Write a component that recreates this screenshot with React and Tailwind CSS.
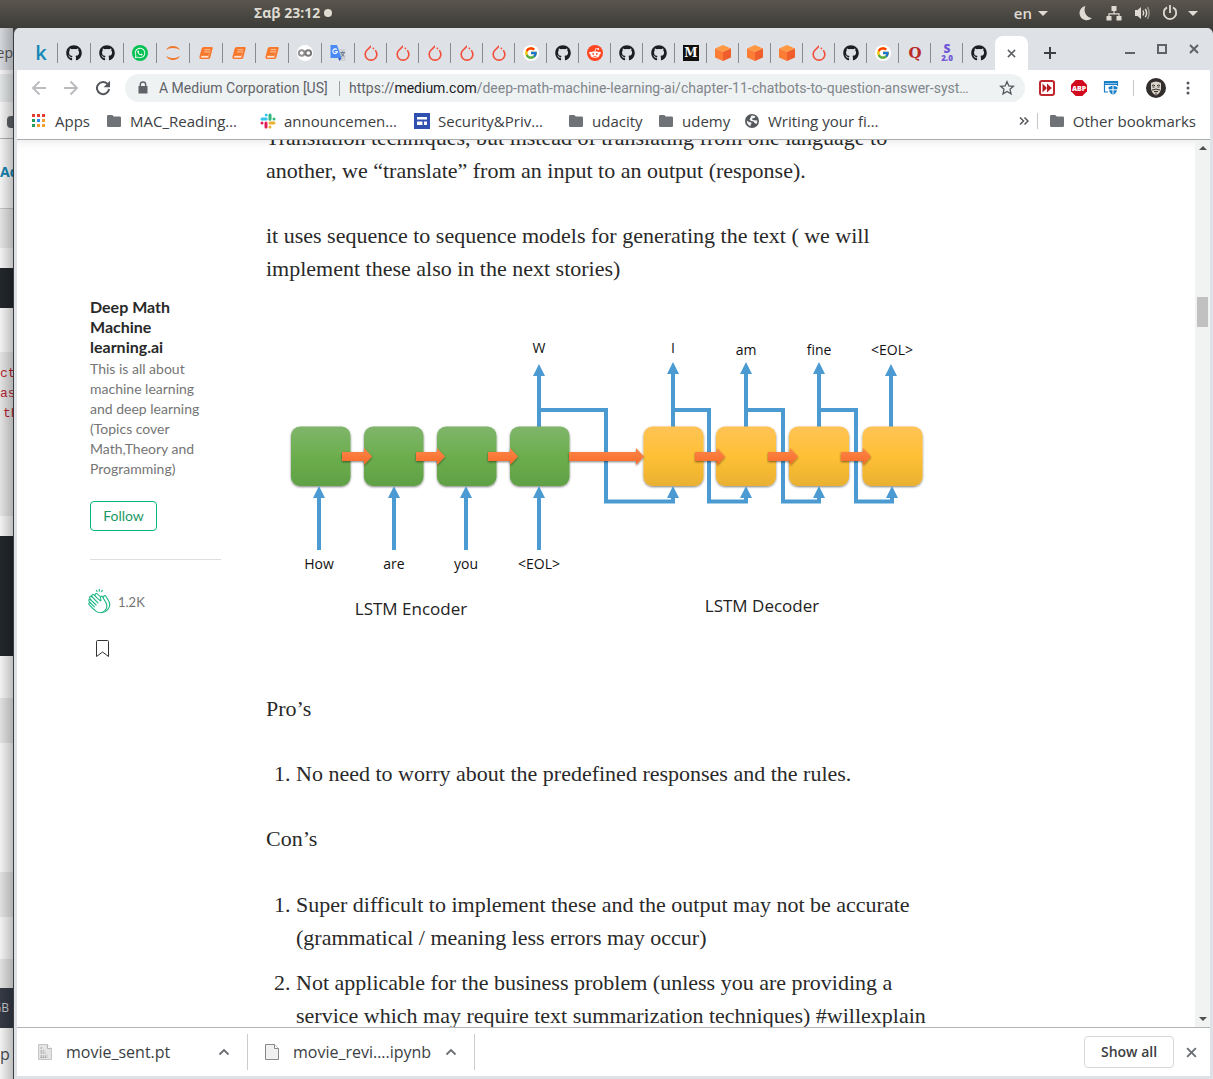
import React from "react";
import { FaGithub, FaWhatsapp } from "react-icons/fa";
import { SiPytorch } from "react-icons/si";
import { FcGoogle } from "react-icons/fc";

const Github = () => <FaGithub className="size-4 text-[#1b1f23]" />;
const Torch = () => <SiPytorch className="size-4 text-[#f0503c]" />;
const Google = () => (
  <span className="flex size-4 items-center justify-center rounded-full bg-white">
    <FcGoogle className="size-[14px]" />
  </span>
);
const Kaggle = () => <span className="w-4 text-center font-['Open_Sans',sans-serif] text-xl leading-4 font-semibold text-[#1388b8]">k</span>;
const WhatsApp = () => (
  <span className="flex size-4 items-center justify-center rounded-full bg-[#04c154]">
    <FaWhatsapp className="size-3 text-white" />
  </span>
);
const Jupyter = () => (
  <svg viewBox="0 0 16 16" className="size-4" fill="#f37726">
    <path d="M1 5.2C2.3 2.2 5 .9 8 .9s5.700 1.300 7 4.300C13.200 3.600 10.800 2.900 8 2.900S2.800 3.600 1 5.200z" />
    <path d="M1 10.800c1.300 3 4 4.300 7 4.300s5.700-1.300 7-4.300c-1.800 1.600-4.200 2.300-7 2.300S2.800 12.400 1 10.800z" />
  </svg>
);
const Book = () => (
  <svg viewBox="0 0 16 16" className="size-4">
    <path d="M5.600 2h8.200q1.200 0 .9 1.200l-2.400 9.300q-.4 1.500-2 1.500H3.200Q1 14 1.500 11.500L3.600 3.700Q4 2 5.600 2z" fill="#f9772a" />
    <path d="M6.600 4.700h5.400M6 6.900h5.400" stroke="#fbc9a5" strokeWidth="1" />
    <path d="M3 11h7.500l1.600-6" fill="none" stroke="#fbd3b6" strokeWidth=".7" opacity=".5" />
    <path d="M3.200 11.900h7.300" stroke="#fff" strokeWidth="1.100" />
  </svg>
);
const Colab = () => (
  <svg viewBox="0 0 16 16" className="size-4">
    <circle cx="8" cy="8" r="8" fill="#fff" />
    <circle cx="4.700" cy="8" r="2.800" fill="none" stroke="#929292" strokeWidth="2" />
    <circle cx="11.300" cy="8" r="2.800" fill="none" stroke="#7b7b7b" strokeWidth="2" />
  </svg>
);
const Translate = () => (
  <svg viewBox="0 0 16 16" className="size-4">
    <path d="M7 4h8.500v12H10z" fill="#cfd1d5" />
    <path d="M.5 0H7l4.500 13H.5z" fill="#4a8af4" />
    <path d="M8.200 13h3.300L9.500 16z" fill="#2456c5" />
    <path d="M6.900 4.700a2.300 2.300 0 1 0 .5 2.100H5" fill="none" stroke="#fff" strokeWidth="1.100" />
    <path d="M10.500 7.500h4.500M12.500 6.500v1M14 7.500c-.4 2-1.500 3.300-2.800 4M11.300 8c.6 1.500 1.700 2.700 3 3.500" fill="none" stroke="#5f6f86" strokeWidth=".9" />
  </svg>
);
const Reddit = () => (
  <svg viewBox="0 0 16 16" className="size-4">
    <circle cx="8" cy="8" r="8" fill="#ff4623" />
    <ellipse cx="8" cy="9.500" rx="4.600" ry="3.300" fill="#fff" />
    <circle cx="3.400" cy="7.900" r="1.200" fill="#fff" />
    <circle cx="12.600" cy="7.900" r="1.200" fill="#fff" />
    <circle cx="11.200" cy="4" r=".9" fill="#fff" />
    <path d="M8 6.500l.7-3 2.400.5" fill="none" stroke="#fff" strokeWidth=".7" />
    <circle cx="6.200" cy="8.900" r=".9" fill="#ff4623" />
    <circle cx="9.800" cy="8.900" r=".9" fill="#ff4623" />
    <path d="M6.200 11c1 .8 2.600.8 3.600 0" fill="none" stroke="#ff4623" strokeWidth=".7" />
  </svg>
);
const Medium = () => (
  <span className="flex size-4 items-center justify-center bg-[#12100e] font-['DejaVu_Serif',serif] text-xs leading-none font-bold text-white">M</span>
);
const Cube = () => (
  <svg viewBox="0 0 16 16" className="size-4">
    <path d="M8 0l8 3.500L8 7 0 3.500z" fill="#ff9840" />
    <path d="M0 3.500L8 7v9l-8-3.500z" fill="#fb7c33" />
    <path d="M16 3.500L8 7v9l8-3.500z" fill="#f05e2b" />
  </svg>
);
const Quora = () => <span className="w-4 text-center font-['DejaVu_Serif',serif] text-[15px] leading-4 font-bold text-[#b92b27]">Q</span>;
const S20 = () => (
  <span className="flex w-4 flex-col items-center font-['Open_Sans',sans-serif] font-extrabold text-[#7058d8]">
    <span className="text-xs leading-[10px]">S</span>
    <span className="text-[8px] leading-[8px]">2.0</span>
  </span>
);

const tabs = [
  ["Kaggle", Kaggle], ["GitHub", Github], ["GitHub", Github], ["WhatsApp", WhatsApp], ["Jupyter", Jupyter],
  ["Notebook", Book], ["Notebook", Book], ["Notebook", Book], ["Colab", Colab], ["Translate", Translate],
  ["PyTorch", Torch], ["PyTorch", Torch], ["PyTorch", Torch], ["PyTorch", Torch], ["PyTorch", Torch],
  ["Google", Google], ["GitHub", Github], ["Reddit", Reddit], ["GitHub", Github], ["GitHub", Github],
  ["Medium", Medium], ["Package", Cube], ["Package", Cube], ["Package", Cube], ["PyTorch", Torch],
  ["GitHub", Github], ["Google", Google], ["Quora", Quora], ["S 2.0", S20], ["GitHub", Github],
];

function SystemBar() {
  return (
    <header className="flex h-7 shrink-0 items-center bg-linear-to-b from-[#5a564e] to-[#3d3c38] pr-[15px] pb-[2px] pl-[254px] text-[#dfdbd2]">
      <button className="flex items-center gap-1 text-sm leading-5 font-bold whitespace-nowrap">
        Σαβ 23:12 <span className="size-2 rounded-full bg-[#dfdbd2]" />
      </button>
      <div className="ml-auto flex items-center">
        <button className="flex items-center gap-[6px] text-[15px] leading-5 font-semibold">
          en
          <svg viewBox="0 0 10 5" className="h-[5px] w-[10px]"><path d="M0 0h10L5 5z" fill="currentColor" /></svg>
        </button>
        <button aria-label="Night mode" className="ml-[30px]">
          <svg viewBox="0 0 16 16" className="size-4"><path d="M7.500 1A7.200 7.200 0 1 0 14 13 8.200 8.200 0 0 1 7.500 1z" fill="currentColor" /></svg>
        </button>
        <button aria-label="Network" className="ml-3">
          <svg viewBox="0 0 16 16" className="size-4" fill="currentColor"><path d="M5.500 1h5v5H8.600v2.300h5V11h1.900v4.500h-5V11h1.900V9.500H3.600V11h1.900v4.500h-5V11h1.900V8.300h5V6H5.500z" /></svg>
        </button>
        <button aria-label="Volume" className="ml-3">
          <svg viewBox="0 0 16 16" className="size-4" fill="none" stroke="currentColor" strokeWidth="1.500">
            <path d="M1 5h2.500l3.500-3v12l-3.500-3H1z" fill="currentColor" stroke="none" />
            <path d="M9 5.500q1.400 2.500 0 5M11.300 3.800q2.600 4.200 0 8.400" />
            <path d="M13.500 2q3.200 6 0 12" opacity=".5" />
          </svg>
        </button>
        <button aria-label="Power" className="ml-3 flex items-center gap-[10px]">
          <svg viewBox="0 0 16 16" className="size-4" fill="none" stroke="currentColor" strokeWidth="1.800"><path d="M8 0v8M5 2.400a6.200 6.200 0 1 0 6 0" /></svg>
          <svg viewBox="0 0 10 5" className="h-[5px] w-[10px]"><path d="M0 0h10L5 5z" fill="currentColor" /></svg>
        </button>
      </div>
    </header>
  );
}

function WindowBehind() {
  return (
    <div className="relative flex w-[13px] shrink-0 flex-col overflow-hidden bg-white text-sm leading-5 whitespace-nowrap" aria-hidden="true">
      <div className="flex h-[42px] shrink-0 items-center justify-end bg-[#dee1e6] pt-2 text-[#555]">eep</div>
      <div className="my-1 h-7 shrink-0 bg-[#eceff0]" />
      <div className="flex h-[33px] shrink-0 items-center justify-end border-b border-[#b5b5b5]">
        <span className="h-3 w-[6px] rounded-l-sm bg-[#606468]" />
      </div>
      <div className="flex h-[65px] shrink-0 items-center font-bold text-[#148ab8]">Ad</div>
      <div className="mt-1 h-10 shrink-0 border-t border-[#ccc] bg-[#eee]" />
      <div className="mt-5 h-10 shrink-0 bg-[#24292e]" />
      <div className="mt-11 h-[164px] shrink-0 bg-[#eee] pt-3 font-['Liberation_Mono',monospace] text-[13px] text-[#c02535]">
        <div>cte</div>
        <div>as</div>
        <div className="pl-[3px]">th</div>
      </div>
      <div className="mt-5 h-[120px] shrink-0 bg-[#24292e]" />
      <div className="mt-[42px] h-[45px] shrink-0 bg-[#ececec]" />
      <div className="mt-[129px] h-[45px] shrink-0 bg-[#ececec]" />
      <div className="mt-[42px] h-[29px] shrink-0 bg-[#ececec]" />
      <div className="flex h-10 shrink-0 items-center justify-end bg-[#373c48] pr-1 text-xs text-[#cfd2d8]">GB</div>
      <div className="flex flex-1 items-center text-base text-[#4a4e53]"><span>p</span></div>
      <div className="absolute inset-0 bg-linear-to-r from-black/5 to-black/25" />
    </div>
  );
}

function TabStrip() {
  return (
    <div className="flex h-[42px] shrink-0 items-end overflow-hidden bg-[#dee1e6] pl-2">
      <div className="flex h-[34px] items-center">
        {tabs.map(([name, Icon], i) => (
          <button
            key={i}
            aria-label={name}
            className={`flex h-5 shrink-0 items-center pl-2 ${i < 10 ? "w-[33px]" : "w-8"} ${i < 29 ? "border-r border-[#888b90]" : ""}`}
          >
            <Icon />
          </button>
        ))}
      </div>
      <button aria-label="Close tab" className="flex h-[34px] w-[33px] shrink-0 items-center justify-center rounded-t-lg bg-white">
        <svg viewBox="0 0 10 10" className="size-[9px]"><path d="M1 1l8 8M9 1l-8 8" stroke="#5f6368" strokeWidth="1.700" /></svg>
      </button>
      <button aria-label="New tab" className="flex h-[34px] w-11 shrink-0 items-center justify-center">
        <svg viewBox="0 0 12 12" className="size-3"><path d="M6 0v12M0 6h12" stroke="#3c4043" strokeWidth="2" /></svg>
      </button>
      <div className="mr-[11px] ml-auto flex h-[42px] items-center gap-[22px]">
        <button aria-label="Minimize"><svg viewBox="0 0 10 10" className="size-[10px]"><path d="M0 9h10" stroke="#5f6368" strokeWidth="2" /></svg></button>
        <button aria-label="Maximize"><svg viewBox="0 0 10 10" className="size-[10px]"><path d="M1 1h8v8H1z" fill="none" stroke="#5f6368" strokeWidth="2" /></svg></button>
        <button aria-label="Close"><svg viewBox="0 0 10 10" className="size-[10px]"><path d="M1 1l8 8M9 1l-8 8" stroke="#5f6368" strokeWidth="2" /></svg></button>
      </div>
    </div>
  );
}

function Toolbar() {
  return (
    <div className="flex h-9 shrink-0 items-center bg-white pr-[14px] pl-[14px]">
      <button aria-label="Back"><svg viewBox="0 0 16 16" className="size-4" fill="none" stroke="#b9bbbe" strokeWidth="1.900"><path d="M15 8H2M8.500 1.500L2 8l6.500 6.500" /></svg></button>
      <button aria-label="Forward" className="ml-4"><svg viewBox="0 0 16 16" className="size-4" fill="none" stroke="#b9bbbe" strokeWidth="1.900"><path d="M1 8h13M7.500 1.500L14 8l-6.500 6.500" /></svg></button>
      <button aria-label="Reload" className="ml-4">
        <svg viewBox="0 0 16 16" className="size-4"><path d="M13 4.500A6.100 6.100 0 1 0 14.100 9" fill="none" stroke="#54585d" strokeWidth="2" /><path d="M15 .8v6.400H8.600z" fill="#54585d" /></svg>
      </button>
      <div className="ml-[14px] flex h-7 min-w-0 flex-1 items-center rounded-full bg-[#eff2f3] pr-[10px] pl-3 font-['Roboto',sans-serif] text-sm leading-5 whitespace-nowrap text-[#5f6368]">
        <svg viewBox="0 0 12 14" className="h-[14px] w-3 shrink-0"><path d="M1.500 5h9v7.500h-9z" fill="#5f6368" /><path d="M3.300 5.500V3.700a2.700 2.700 0 0 1 5.400 0v1.800" fill="none" stroke="#5f6368" strokeWidth="1.400" /></svg>
        <button className="ml-[10px] w-[173px] shrink-0 text-left">A Medium Corporation [US]</button>
        <span className="ml-[7px] h-[15px] w-px bg-[#9a9da1]" />
        <label className="ml-[9px] flex min-w-0 flex-1 items-center">
          <span>https://</span>
          <span className="text-[#202124]">medium.com</span>
          <input
            aria-label="Address"
            className="min-w-0 flex-1 bg-transparent text-[#80868b] outline-none"
            defaultValue="/deep-math-machine-learning-ai/chapter-11-chatbots-to-question-answer-syst…"
          />
        </label>
        <button aria-label="Bookmark" className="ml-1">
          <svg viewBox="0 0 16 16" className="size-4"><path d="M8 1.700l1.900 4.200 4.500.4-3.400 3 1 4.500L8 11.400l-4 2.400 1-4.500-3.400-3 4.500-.4z" fill="none" stroke="#54585d" strokeWidth="1.300" /></svg>
        </button>
      </div>
      <button aria-label="Fast forward" className="ml-[14px]">
        <svg viewBox="0 0 16 16" className="size-4"><rect x="1" y="1" width="14" height="14" rx="2" fill="#fff" stroke="#c0272d" strokeWidth="2" /><path d="M3.500 3.500L8 8l-4.500 4.500zM8 3.500L12.800 8 8 12.500z" fill="#b81c22" /></svg>
      </button>
      <button aria-label="Adblock Plus" className="ml-4">
        <svg viewBox="0 0 16 16" className="size-4"><path d="M4.700 0h6.600L16 4.700v6.600L11.300 16H4.700L0 11.300V4.700z" fill="#d20a1e" /><text x="8" y="10.500" textAnchor="middle" fontSize="7" fontWeight="800" fill="#fff">ABP</text></svg>
      </button>
      <button aria-label="Window shield" className="ml-4">
        <svg viewBox="0 0 16 16" className="size-4"><path d="M5 12H1.500V1.500h13V6M1.500 4.500h13" fill="none" stroke="#1a7fc9" strokeWidth="1.200" /><path d="M1 1h14v2.500H1z" fill="#1a7fc9" /><path d="M5.500 7l4.500-1.500L14.500 7c0 4-1.500 6.500-4.500 8-3-1.500-4.500-4-4.500-8z" fill="#1a7fc9" /><path d="M10 5v10.500M5 9.800h10" stroke="#fff" /></svg>
      </button>
      <span className="ml-[14px] h-4 w-px bg-[#c6c8ca]" />
      <button aria-label="Profile" className="ml-3">
        <svg viewBox="0 0 20 20" className="size-5">
          <circle cx="10" cy="10" r="10" fill="#322e2d" />
          <path d="M5 5q5-3 10 0v6q-1 4.500-5 6.500Q6 15.500 5 11z" fill="#dcd5ca" />
          <path d="M6 7.500q1.500-1 3 .3M11 7.800q1.500-1.300 3-.3M6.500 9h2M11.500 9h2M6 12q2-.2 4-1 2 .8 4 1M8 13.500h4M10 14.500v2.500" fill="none" stroke="#322e2d" />
        </svg>
      </button>
      <button aria-label="Menu" className="ml-[14px]">
        <svg viewBox="0 0 16 16" className="size-4" fill="#54585d"><circle cx="8" cy="3" r="1.500" /><circle cx="8" cy="8" r="1.500" /><circle cx="8" cy="13" r="1.500" /></svg>
      </button>
    </div>
  );
}

const Folder = () => (
  <svg viewBox="0 0 14 12" className="h-3 w-[14px] shrink-0"><path d="M1.300 0h4l1.500 1.500h6q1.200 0 1.200 1.200v8.100q0 1.200-1.200 1.200H1.200Q0 12 0 10.800V1.200Q0 0 1.300 0z" fill="#6f7377" /></svg>
);
const AppsIcon = () => (
  <svg viewBox="0 0 13 13" className="size-[13px] shrink-0">
    <path d="M0 0h3v3H0zM5 0h3v3H5zM10 0h3v3h-3z" fill="#e53e30" />
    <path d="M0 5h3v3H0z" fill="#239d58" /><path d="M5 5h3v3H5z" fill="#2d8cf0" /><path d="M10 5h3v3h-3z" fill="#f2a02c" />
    <path d="M0 10h3v3H0z" fill="#239d58" /><path d="M5 10h3v3H5zM10 10h3v3h-3z" fill="#f2a02c" />
  </svg>
);
const Slack = () => (
  <svg viewBox="0 0 16 16" className="size-4 shrink-0" strokeWidth="3" strokeLinecap="round">
    <path d="M6.200 2v0M2 6h4.200" stroke="#36c5f0" /><path d="M10 2v4.200M14 6v0" stroke="#2eb67d" />
    <path d="M10 14v0M10 10h4" stroke="#ecb22e" /><path d="M6 10v4M2 10v0" stroke="#e01e5a" />
  </svg>
);
const Sites = () => (
  <svg viewBox="0 0 16 16" className="size-4 shrink-0"><path d="M0 0h16v16H0z" fill="#3050b0" /><path d="M3 4h10v2.500H3zM3 8.500h5.500V12H3zM10 8.500h3V12h-3z" fill="#fff" /></svg>
);
const Globe = () => (
  <svg viewBox="0 0 14 14" className="size-[14px] shrink-0"><circle cx="7" cy="7" r="7" fill="#54585d" /><path d="M6.500 1.600Q9 1.300 10.500 2.700L9.500 4 7.500 4.200 7 5.500l2 .8 3.300.2q.2 2-.8 3.500L9.500 9l-1-1.500L6 7 4.500 5.800zM1.700 6.500L4 8l2.300.6L6.500 10l-1 .6.3 1.600Q2 11.300 1.700 6.500z" fill="#f4f5f6" /></svg>
);

const bookmarks = [
  ["Apps", AppsIcon, "w-[75px] gap-[10px]"],
  ["MAC_Reading…", Folder, "w-[153px] gap-[9px]"],
  ["announcemen…", Slack, "w-[154px] gap-2"],
  ["Security&Priv…", Sites, "w-[155px] gap-2"],
  ["udacity", Folder, "w-[90px] gap-[9px]"],
  ["udemy", Folder, "w-[86px] gap-[9px]"],
  ["Writing your fi…", Globe, "w-[153px] gap-[9px]"],
];

function BookmarksBar() {
  return (
    <nav className="flex h-[34px] shrink-0 items-center border-b border-[#aaacaf] bg-white pr-[14px] pb-1 pl-[15px] text-[15px] leading-5 whitespace-nowrap text-[#3c4043]">
      {bookmarks.map(([label, Icon, cls]) => (
        <a key={label} href="#" className={`flex shrink-0 items-center ${cls}`}>
          <Icon />
          {label}
        </a>
      ))}
      <button className="mr-2 ml-auto" aria-label="More bookmarks">
        <svg viewBox="0 0 10 8" className="h-2 w-[10px]" fill="none" stroke="#54585d" strokeWidth="1.500"><path d="M1 .5L4.500 4 1 7.500M5.500.5L9 4 5.500 7.500" /></svg>
      </button>
      <span className="h-4 w-px bg-[#c6c8ca]" />
      <a href="#" className="ml-3 flex shrink-0 items-center gap-[9px]">
        <Folder />
        Other bookmarks
      </a>
    </nav>
  );
}

function Sidebar() {
  return (
    <aside className="mt-[157px] ml-[73px] w-[131px] shrink-0 font-['Lato',sans-serif] text-sm leading-5 text-[#757575]">
      <h2 className="text-base leading-5 font-bold text-[#292929]">
        Deep Math<br />Machine<br />learning.ai
      </h2>
      <p className="mt-[2px] whitespace-nowrap">
        This is all about<br />machine learning<br />and deep learning<br />(Topics cover<br />Math,Theory and<br />Programming)
      </p>
      <button className="mt-[22px] h-[30px] w-[67px] rounded border border-[#02b875] text-sm leading-5 text-[#1c9963]">Follow</button>
      <hr className="mt-7 border-[#dedede]" />
      <button className="mt-7 -ml-[3px] flex h-7 items-center gap-[6px] text-[13px]">
        <svg viewBox="0 0 25 28" className="h-7 w-[25px] shrink-0" fill="none" stroke="#1bb583" strokeWidth="1.100" strokeLinecap="round" strokeLinejoin="round">
          <path d="M9.300 2.300l.8 1.200M12.300 1.300v1.900M15.400 2.300l-.8 1.300" />
          <path d="M2.600 17.200q-1.400-1.600-.5-2.300.6-.5 1.500.3-2.500-2.900-1.500-3.700.7-.6 1.700.4-1.900-2.500-.7-3.500.8-.7 2 .5-.8-1.500.2-2.100 1.100-.7 2.300.6 4.300 4.200 5.700 5.300.9.400.6-.8-.7-2.500-.1-3.500.7-1 1.700.4l3.600 6.200q2 4.300-1.200 7.700-4.200 3.600-8.600.7-3.500-2.500-6.700-6.200z" />
          <path d="M3.600 15.200l3.800 3.700M3.800 11.900l5.300 5.100M5.100 8.900l5.800 6M8 7.500q0-2.300 1.600-2 .9.200 3.500 3M16.500 9.500q.3-2.300 1.500-1.900.8.300 1.500 1.700l2.600 4.500q1.800 4.500-1.600 8-2.500 2.600-6 3" />
        </svg>
        <span>1.2K</span>
      </button>
      <button aria-label="Save story" className="mt-6 ml-[6px] block">
        <svg viewBox="0 0 13 17" className="h-[17px] w-[13px]"><path d="M.5 1.500q0-1 1-1h10q1 0 1 1v15l-6-4.500-6 4.500z" fill="none" stroke="#333" /></svg>
      </button>
    </aside>
  );
}

const blue = "#4b9bd2";
const Up = ({ x, from, to }) => (
  <g>
    <path d={`M${x} ${from}V${to + 9}`} stroke={blue} strokeWidth="4" />
    <path d={`M${x - 6} ${to + 12}L${x} ${to}L${x + 6} ${to + 12}z`} fill={blue} />
  </g>
);
const Right = ({ x, to, id = "orange" }) => (
  <path d={`M${x} 132h${to - x - 8}v-4l8 8.500l-8 8.500v-4H${x}z`} fill={`url(#${id})`} filter="url(#shade)" />
);

function LstmDiagram() {
  return (
    <svg viewBox="0 0 700 340" className="mt-[35px] block w-full max-w-[700px]" fontFamily="'Open Sans', sans-serif" role="img" aria-label="LSTM encoder and decoder">
      <defs>
        <linearGradient id="green" x2="0" y2="1"><stop stopColor="#80b56b" /><stop offset=".5" stopColor="#6cae4e" /><stop offset="1" stopColor="#60a045" /></linearGradient>
        <linearGradient id="yellow" x2="0" y2="1"><stop stopColor="#ffc356" /><stop offset=".5" stopColor="#ffc035" /><stop offset="1" stopColor="#e9b030" /></linearGradient>
        <linearGradient id="orange" x2="0" y2="1"><stop stopColor="#ff8748" /><stop offset="1" stopColor="#f56a2a" /></linearGradient>
        <filter id="shade" x="-10%" y="-20%" width="120%" height="150%"><feDropShadow dx="0" dy="1" stdDeviation="1" floodOpacity=".5" /></filter>
      </defs>
      <g fill="none" stroke={blue} strokeWidth="4">
        <path d="M273 90h67v91.500h67V176M407 90h36v91.500h37V176M480 90h37v91.500h36V176M553 90h37v91.500h36V176" />
      </g>
      <Up x={273} from={107} to={44} />
      <Up x={407} from={107} to={42} />
      <Up x={480} from={107} to={42} />
      <Up x={553} from={107} to={42} />
      <Up x={625} from={107} to={44} />
      {[25, 98, 171, 244].map((x) => (
        <rect key={x} x={x} y="106.500" width="59.500" height="59.500" rx="9" fill="url(#green)" filter="url(#shade)" />
      ))}
      {[377.5, 450, 523, 596.5].map((x) => (
        <rect key={x} x={x} y="106.500" width="60" height="59.500" rx="9" fill="url(#yellow)" filter="url(#shade)" />
      ))}
      {[53, 128, 200, 273].map((x) => <Up key={x} x={x} from={230} to={166} />)}
      {[407, 480, 553, 626].map((x) => <Up key={x} x={x} from={180} to={166} />)}
      <Right x={76} to={106} /><Right x={150} to={179} /><Right x={222} to={252} />
      <Right x={303} to={378} /><Right x={429} to={459} /><Right x={502} to={532} /><Right x={575} to={605} />
      <g fontSize="14" fill="#111" textAnchor="middle">
        <text x="273" y="33">W</text>
        <text x="407" y="33">I</text>
        <text x="480" y="35">am</text>
        <text x="553" y="35">fine</text>
        <text x="626" y="35">&lt;EOL&gt;</text>
        <text x="53" y="249">How</text>
        <text x="128" y="249">are</text>
        <text x="200" y="249">you</text>
        <text x="273" y="249">&lt;EOL&gt;</text>
      </g>
      <g fontSize="17" fill="#222" textAnchor="middle">
        <text x="145" y="295">LSTM Encoder</text>
        <text x="496" y="292">LSTM Decoder</text>
      </g>
    </svg>
  );
}

function Article() {
  return (
    <article className="-mt-[19px] ml-[45px] max-w-[700px] min-w-0 flex-1 font-['Liberation_Serif',serif] text-[22px] leading-[33px] whitespace-nowrap text-[#292929]">
      <p>Translation techniques, but instead of translating from one language to<br />another, we “translate” from an input to an output (response).</p>
      <p className="mt-8">it uses sequence to sequence models for generating the text ( we will<br />implement these also in the next stories)</p>
      <LstmDiagram />
      <p className="mt-8">Pro’s</p>
      <ol className="mt-8 list-decimal pl-[30px]">
        <li>No need to worry about the predefined responses and the rules.</li>
      </ol>
      <p className="mt-8">Con’s</p>
      <ol className="mt-[33px] list-decimal pl-[30px]">
        <li>Super difficult to implement these and the output may not be accurate<br />(grammatical / meaning less errors may occur)</li>
        <li className="mt-3">Not applicable for the business problem (unless you are providing a<br />service which may require text summarization techniques) #willexplain</li>
      </ol>
    </article>
  );
}

function Scrollbar() {
  return (
    <div className="ml-auto flex w-[15px] shrink-0 flex-col items-center bg-[#f1f2f2]" aria-hidden="true">
      <svg viewBox="0 0 8 4" className="mt-[6px] h-1 w-2"><path d="M0 4h8L4 0z" fill="#505050" /></svg>
      <div className="mt-[147px] h-[30px] w-[11px] bg-[#c1c1c1]" />
      <svg viewBox="0 0 8 4" className="mt-auto mb-[6px] h-1 w-2"><path d="M0 0h8L4 4z" fill="#505050" /></svg>
    </div>
  );
}

const Chevron = () => (
  <svg viewBox="0 0 12 8" className="h-2 w-3"><path d="M1.500 6.500L6 2l4.500 4.500" fill="none" stroke="#6b6f73" strokeWidth="1.800" /></svg>
);
const FileIcon = ({ binary }) => (
  <svg viewBox="0 0 14 16" className="h-4 w-[14px] shrink-0">
    <path d="M.5.5h9l4 4v11H.5z" fill={binary ? "#e4e4e4" : "#f0f0f0"} stroke={binary ? "#c4c4c4" : "#888"} />
    <path d="M9.500.5v4h4" fill="#fff" stroke={binary ? "#b5b5b5" : "#888"} />
    {binary && <path d="M2.500 4h2M2.500 7h4M2.500 9h5M2.500 12h7M2.500 13.500h6" stroke="#999" strokeDasharray="1.500 .7" />}
  </svg>
);

function Downloads() {
  return (
    <footer className="flex h-[49px] shrink-0 items-center border-t border-[#b2b4b6] bg-white pr-[13px] text-base leading-5 whitespace-nowrap text-[#3c4043]">
      <div className="flex h-9 w-[231px] items-center border-r border-[#ccc] pr-[17px] pl-[21px]">
        <FileIcon binary />
        <a href="#" className="ml-[14px]">movie_sent.pt</a>
        <button aria-label="movie_sent.pt options" className="ml-auto"><Chevron /></button>
      </div>
      <div className="flex h-9 w-[227px] items-center border-r border-[#ccc] pr-[17px] pl-[17px]">
        <FileIcon />
        <a href="#" className="ml-[14px]">movie_revi….ipynb</a>
        <button aria-label="movie_revi….ipynb options" className="ml-auto"><Chevron /></button>
      </div>
      <button className="ml-auto h-8 w-[90px] rounded border border-[#d6d8db] text-sm leading-5 font-semibold">Show all</button>
      <button aria-label="Close downloads" className="ml-3"><svg viewBox="0 0 10 10" className="size-[11px]"><path d="M1 1l8 8M9 1l-8 8" stroke="#6b6f73" strokeWidth="1.700" /></svg></button>
    </footer>
  );
}

export default function App() {
  return (
    <div className="flex h-screen flex-col overflow-hidden bg-[#3d3c38] font-['Open_Sans',sans-serif]">
      <SystemBar />
      <div className="flex min-h-0 flex-1">
        <WindowBehind />
        <div className="flex min-w-0 flex-1 flex-col overflow-hidden rounded-t-md border-l border-[#3a3c40] bg-[#dee1e6]">
          <div className="flex min-h-0 flex-1 flex-col px-[3px] pb-[3px]">
            <TabStrip />
            <Toolbar />
            <BookmarksBar />
            <main className="flex min-h-0 flex-1 overflow-hidden bg-white shadow-[inset_0_10px_12px_-10px_rgba(0,0,0,0.12)]">
              <Sidebar />
              <Article />
              <Scrollbar />
            </main>
            <Downloads />
          </div>
        </div>
      </div>
    </div>
  );
}
